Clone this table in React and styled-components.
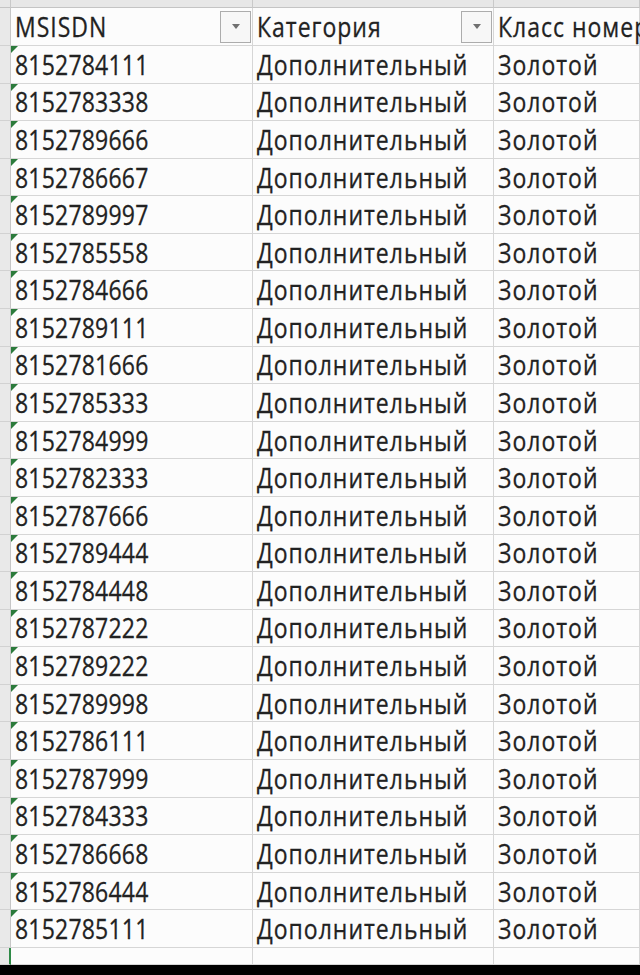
import React from "react";
import styled, { createGlobalStyle } from "styled-components";

const numbers = [
  "8152784111",
  "8152783338",
  "8152789666",
  "8152786667",
  "8152789997",
  "8152785558",
  "8152784666",
  "8152789111",
  "8152781666",
  "8152785333",
  "8152784999",
  "8152782333",
  "8152787666",
  "8152789444",
  "8152784448",
  "8152787222",
  "8152789222",
  "8152789998",
  "8152786111",
  "8152787999",
  "8152784333",
  "8152786668",
  "8152786444",
  "8152785111"
];

const GlobalStyle = createGlobalStyle`
  html, body {
    margin: 0;
    padding: 0;
    background: #000;
  }
  body {
    width: 640px;
    height: 975px;
    overflow: hidden;
  }
`;

const Sheet = styled.div`
  width: 640px;
  height: 965px;
  background: #fcfcfc;
  display: flex;
  flex-direction: column;
  overflow: hidden;
  font-family: "Open Sans", "Liberation Sans", sans-serif;
  color: #222;
`;

const Row = styled.div`
  display: grid;
  grid-template-columns: 11px 242px 241px 1fr;
  height: ${p => p.h}px;
  flex: none;
`;

const Cell = styled.div`
  position: relative;
  box-sizing: border-box;
  border-right: 1px solid #d6d6d6;
  border-bottom: 1px solid #d6d6d6;
  display: flex;
  align-items: center;
  justify-content: space-between;
  padding-left: 4px;
  font-size: 23px;
  white-space: nowrap;
  min-width: 0;

  ${p =>
    p.flag &&
    `
    &::before {
      content: "";
      position: absolute;
      top: 0;
      left: 0;
      border-top: 7px solid #2b7a3b;
      border-right: 7px solid transparent;
    }
  `}
`;

const TopCell = styled.div`
  box-sizing: border-box;
  background: #e7e7e7;
  border-right: 1px solid #c9c9c9;
  border-bottom: 1px solid #c4c4c4;
`;

const RowHead = styled.div`
  box-sizing: border-box;
  background: #e9e9e9;
  border-right: ${p => (p.active ? "2px solid #2f8a47" : "1px solid #c6c6c6")};
  border-bottom: 1px solid #d2d2d2;
`;

const Text = styled.span`
  display: inline-block;
  transform: scaleY(1.2);
  transform-origin: center;
  line-height: 1;
  letter-spacing: ${p => (p.wide ? "1px" : "0.2px")};
  -webkit-text-stroke: 0.25px #222;
`;

const FilterButton = styled.div`
  box-sizing: border-box;
  width: 31px;
  height: 32px;
  margin-right: 1px;
  border: 1px solid #acacac;
  background: #f7f7f7;
  display: flex;
  align-items: center;
  justify-content: center;

  &::after {
    content: "";
    border-top: 5px solid #707070;
    border-left: 4.5px solid transparent;
    border-right: 4.5px solid transparent;
  }
`;

const ROW_H = 37.58;

export default function App() {
  return (
    <>
      <GlobalStyle />
      <Sheet>
        <Row h={8}>
          <TopCell />
          <TopCell />
          <TopCell />
          <TopCell />
        </Row>
        <Row h={38}>
          <RowHead />
          <Cell>
            <Text wide>MSISDN</Text>
            <FilterButton />
          </Cell>
          <Cell>
            <Text wide>Категория</Text>
            <FilterButton />
          </Cell>
          <Cell>
            <Text wide>Класс номер</Text>
          </Cell>
        </Row>
        {numbers.map(n => (
          <Row key={n} h={ROW_H}>
            <RowHead />
            <Cell flag>
              <Text>{n}</Text>
            </Cell>
            <Cell>
              <Text wide>Дополнительный</Text>
            </Cell>
            <Cell>
              <Text wide>Золотой</Text>
            </Cell>
          </Row>
        ))}
        <Row h={17}>
          <RowHead active />
          <Cell />
          <Cell />
          <Cell />
        </Row>
      </Sheet>
    </>
  );
}
